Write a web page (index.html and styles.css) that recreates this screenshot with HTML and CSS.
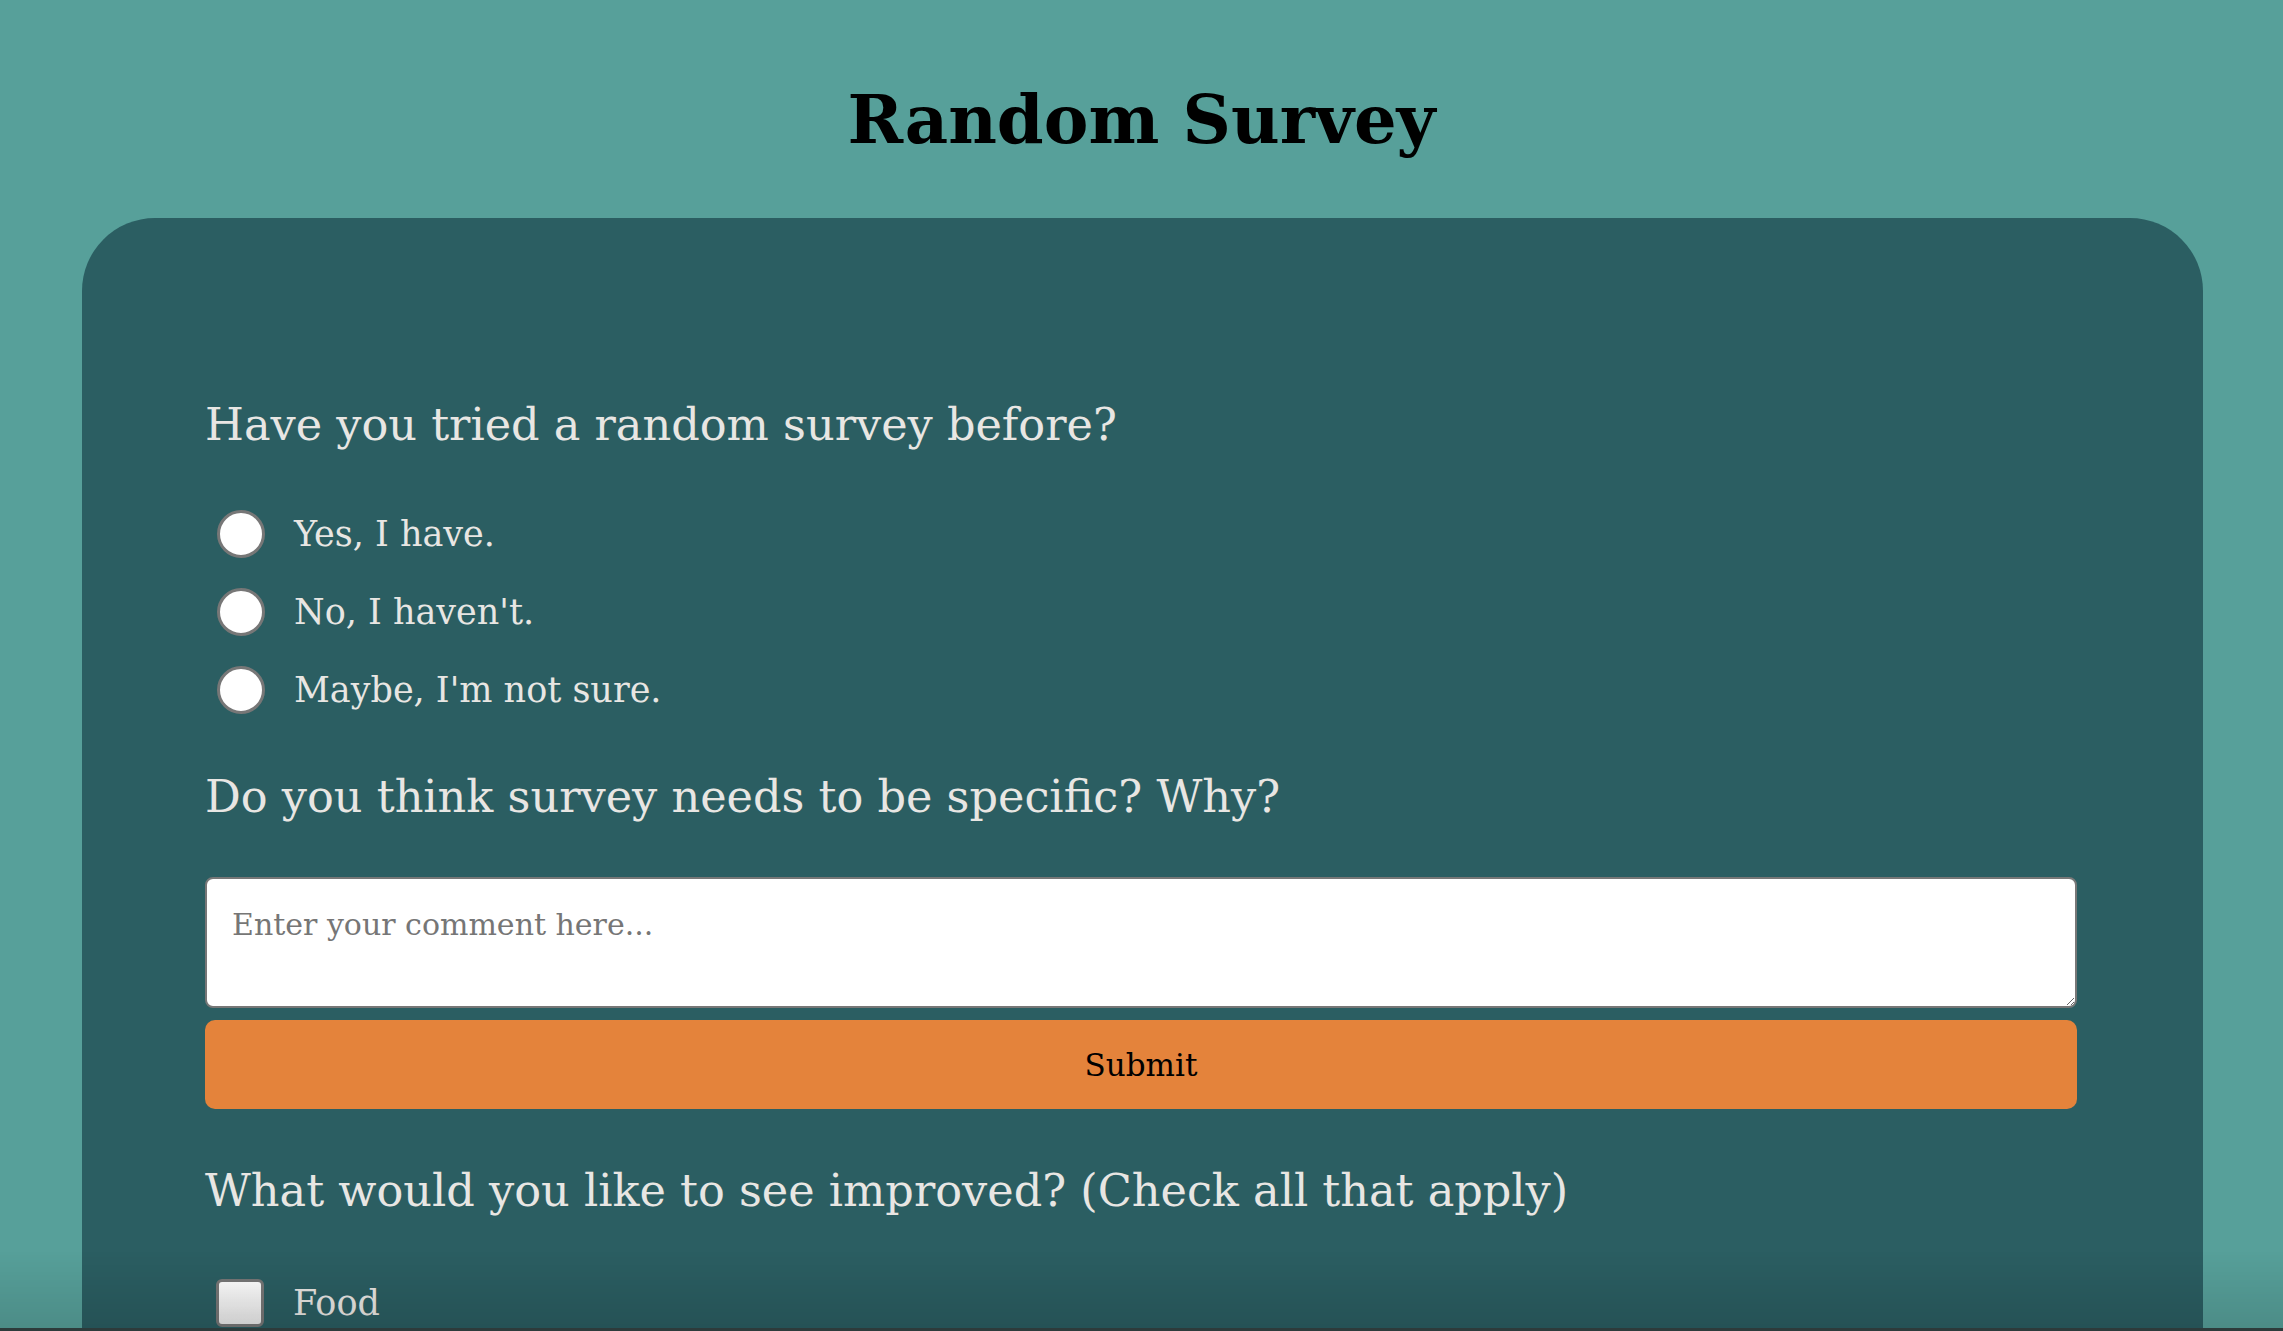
FILE: index.html
```html
<!DOCTYPE html>
<html lang="en">
<head>
<meta charset="utf-8">
<title>Random Survey</title>
<link rel="stylesheet" href="styles.css">
</head>
<body>
<h1 class="title">Random Survey</h1>
<main class="card">
  <form class="survey">
    <h2 class="question">Have you tried a random survey before?</h2>
    <div class="options">
      <label class="option"><input type="radio" name="tried" class="radio"><span>Yes, I have.</span></label>
      <label class="option"><input type="radio" name="tried" class="radio"><span>No, I haven't.</span></label>
      <label class="option"><input type="radio" name="tried" class="radio"><span>Maybe, I'm not sure.</span></label>
    </div>
    <h2 class="question q-specific">Do you think survey needs to be specific? Why?</h2>
    <textarea class="comment" placeholder="Enter your comment here..."></textarea>
    <button type="button" class="submit">Submit</button>
    <h2 class="question q-improve">What would you like to see improved? (Check all that apply)</h2>
    <div class="options checks">
      <label class="option"><input type="checkbox" class="check"><span>Food</span></label>
    </div>
  </form>
</main>
<div class="bottom-shade"></div>
</body>
</html>
```

FILE: styles.css
```css
* { box-sizing: border-box; }

html, body {
  margin: 0;
  padding: 0;
}

body {
  background: #57a09a;
  font-family: "DejaVu Serif", "Liberation Serif", serif;
  min-height: 100vh;
}

.title {
  margin: 86px 0 65px;
  font-size: 67px;
  line-height: 67px;
  font-weight: 700;
  text-align: center;
  color: #000;
}

.card {
  margin: 0 80px 0 82px;
  background: #2b5e62;
  border-radius: 73px;
  padding: 181px 126px 200px 123px;
  color: #e8e6e3;
}

.survey {
  display: flex;
  flex-direction: column;
}

.question {
  margin: 0;
  font-size: 44.6px;
  line-height: 52px;
  font-weight: 400;
  color: #e8e6e3;
}

.options {
  display: flex;
  flex-direction: column;
  margin-top: 44px;
}

.option {
  display: flex;
  align-items: center;
  height: 78px;
  font-size: 35px;
  line-height: 78px;
}

.radio,
.check {
  appearance: none;
  -webkit-appearance: none;
  flex: none;
  width: 48px;
  height: 48px;
  margin: 0 29px 0 12px;
  border: 3px solid #777;
  background: #fff;
}

.radio {
  border-radius: 50%;
}

.check {
  margin-left: 11px;
  border-radius: 6px;
  background: linear-gradient(#ffffff, #e9e9e9);
}

.q-specific {
  margin-top: 42px;
}

.comment {
  margin-top: 54px;
  height: 131px;
  border: 2px solid #777;
  border-radius: 8px;
  padding: 28px 25px;
  font-family: inherit;
  font-size: 30px;
  color: #333;
  background: #fff;
  resize: vertical;
}

.comment::placeholder {
  color: #767676;
}

.submit {
  margin-top: 12px;
  height: 89px;
  border: none;
  border-radius: 10px;
  background: #e4833b;
  color: #000;
  font-family: inherit;
  font-size: 31px;
}

.q-improve {
  margin-top: 56px;
}

.checks {
  margin-top: 47px;
}

.bottom-shade {
  position: fixed;
  left: 0;
  right: 0;
  bottom: 0;
  height: 80px;
  background: linear-gradient(to bottom, rgba(0, 0, 0, 0), rgba(0, 0, 0, 0.12));
  border-bottom: 3px solid #2d3b3b;
  pointer-events: none;
}
```
